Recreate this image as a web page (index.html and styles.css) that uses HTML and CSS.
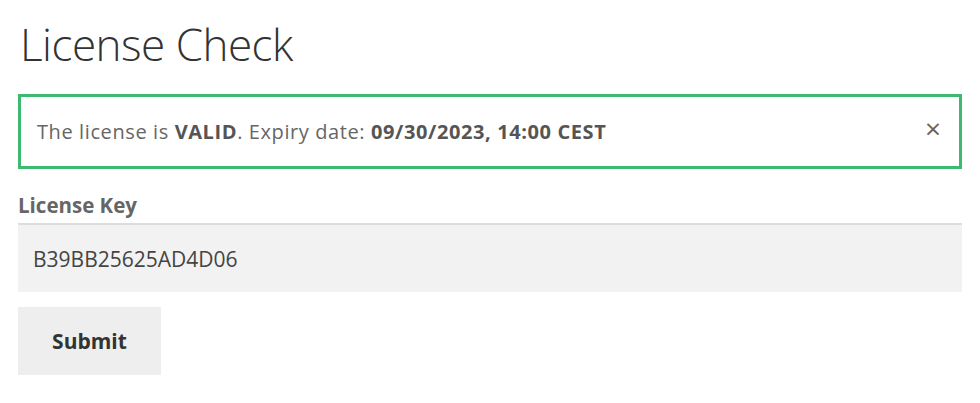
FILE: index.html
```html
<!DOCTYPE html>
<html lang="en">
<head>
    <meta charset="UTF-8">
    <title>License Check</title>
    <link rel="stylesheet" href="styles.css">
</head>
<body>
    <div class="page">
        <h1>License Check</h1>

        <div class="alert">
            <span>The license is <strong>VALID</strong>. Expiry date: <strong>09/30/2023, 14:00 CEST</strong></span>
            <button type="button" class="close">&times;</button>
        </div>

        <form class="license-form">
            <label for="key">License Key</label>
            <input type="text" id="key" name="key" value="B39BB25625AD4D06">
            <button type="submit" class="submit">Submit</button>
        </form>
    </div>
</body>
</html>
```

FILE: styles.css
```css
body {
    margin: 0;
    font-family: "Open Sans", sans-serif;
    color: #555;
    background: #fff;
}

.page {
    padding: 0 18px;
}

h1 {
    margin: 0;
    padding: 14px 0 0 2px;
    height: 94px;
    box-sizing: border-box;
    font-size: 44px;
    font-weight: 300;
    color: #333;
    letter-spacing: -0.5px;
}

.alert {
    display: flex;
    align-items: center;
    justify-content: space-between;
    height: 75px;
    box-sizing: border-box;
    border: 3px solid #3dba6f;
    padding: 0 18px 0 16px;
    font-size: 20px;
    letter-spacing: 0.6px;
    color: #666;
}

.alert strong {
    font-weight: 700;
    color: #555;
}

.close {
    border: none;
    background: none;
    padding: 0 0 8px;
    font-size: 28px;
    line-height: 1;
    color: #666;
    cursor: pointer;
    font-family: "Open Sans", sans-serif;
}

.license-form {
    display: flex;
    flex-direction: column;
    align-items: flex-start;
    padding-top: 24px;
}

label {
    font-size: 20.5px;
    line-height: 24px;
    font-weight: 700;
    color: #666;
    margin-bottom: 6px;
}

input[type="text"] {
    width: 100%;
    height: 69px;
    box-sizing: border-box;
    border: none;
    border-top: 2px solid #ddd;
    background: #f2f2f2;
    padding: 0 15px;
    font-family: "Open Sans", sans-serif;
    font-size: 21px;
    color: #444;
    margin: 0 0 15px;
}

.submit {
    width: 143px;
    height: 68px;
    border: none;
    background: #eee;
    font-family: "Open Sans", sans-serif;
    font-size: 21px;
    font-weight: 700;
    color: #333;
    cursor: pointer;
}
```
